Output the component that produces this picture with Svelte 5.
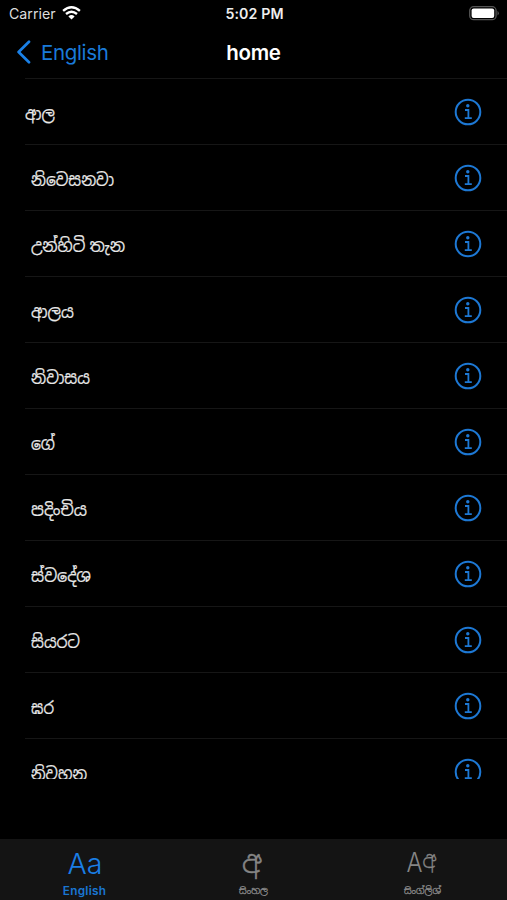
<script>
  const words = ['ආල', ' නිවෙසනවා', ' උන්හිටි තැන', ' ආලය', ' නිවාසය', ' ගේ', ' පදිංචිය', ' ස්වදේශ', ' සියරට', ' ඝර', ' නිවහන'];
  const widths = [30, 83, 94, 43, 59, 24, 56, 60, 49, 23, 56];
</script>

<div class="screen">
  <header class="status">
    <div class="carrier">
      <span>Carrier</span>
      <svg width="19" height="14" viewBox="0 0 19 14" fill="none" stroke="#fff" stroke-width="2.4">
        <path d="M1.1 4.9Q9.5 -2.3 17.9 4.9" /><path d="M4 8Q9.5 3.4 15 8" />
        <path d="M6.4 10.4Q9.5 7.8 12.6 10.4L9.5 13.5Z" fill="#fff" stroke="none" />
      </svg>
    </div>
    <div class="time">5:02 PM</div>
    <svg class="battery" width="31" height="15" viewBox="0 0 31 15">
      <rect x=".7" y=".7" width="26.4" height="13" rx="4" fill="none" stroke="#555" stroke-width="1.3" />
      <rect x="2.6" y="2.6" width="22.6" height="9.3" rx="2" fill="#fff" />
      <path d="M28.5 4.8Q31.2 7.2 28.5 9.6Z" fill="#555" />
    </svg>
  </header>
  <nav class="bar">
    <div class="back">
      <svg width="15" height="24" viewBox="0 0 15 24"><path d="M13 1.7L2.6 12L13 22.3" fill="none" stroke="#1a80e6" stroke-width="2.7" stroke-linecap="round" stroke-linejoin="round" /></svg>
      <span>English</span>
    </div>
    <h1>home</h1>
  </nav>
  <main>
    {#each words as word, i}
      <div class="row">
        <svg class="word" class:inset={i > 0} width="130" height="40" viewBox="0 0 130 40">
          <text x="0" y="25.5" textLength={widths[i]} lengthAdjust="spacingAndGlyphs">{word.trim()}</text>
        </svg>
        <svg class="info" width="28" height="28" viewBox="0 0 28 28">
          <circle cx="14" cy="14" r="12.3" fill="none" stroke="#1d78d4" stroke-width="2" />
          <circle cx="13.8" cy="7.7" r="1.7" fill="#1d78d4" />
          <path d="M11 12H14.4V20M10.8 20.2H17.8" fill="none" stroke="#1d78d4" stroke-width="1.8" />
        </svg>
      </div>
    {/each}
  </main>
  <footer>
    <div class="tab active">
      <svg width="60" height="42" viewBox="0 0 60 42"><text x="12.5" y="35" font-size="29" textLength="35" lengthAdjust="spacingAndGlyphs">Aa</text></svg>
      <span class="label">English</span>
    </div>
    <div class="tab">
      <svg width="60" height="42" viewBox="0 0 60 42"><text x="18" y="33.5" font-size="31" textLength="20" lengthAdjust="spacingAndGlyphs" stroke="#858585" stroke-width=".5">අ</text></svg>
      <svg width="60" height="18" viewBox="0 0 60 18"><text x="15" y="13" font-size="9.3" textLength="29" lengthAdjust="spacingAndGlyphs" stroke="#858585" stroke-width=".35">සිංහල</text></svg>
    </div>
    <div class="tab">
      <svg width="60" height="42" viewBox="0 0 60 42">
        <text x="13.5" y="33" font-size="27" textLength="16" lengthAdjust="spacingAndGlyphs">A</text>
        <text x="29.5" y="28.5" font-size="23" textLength="14" lengthAdjust="spacingAndGlyphs" stroke="#858585" stroke-width=".3">අ</text>
      </svg>
      <svg width="60" height="18" viewBox="0 0 60 18"><text x="11" y="13" font-size="9.3" textLength="37" lengthAdjust="spacingAndGlyphs" stroke="#858585" stroke-width=".35">සිංග්ලිශ්</text></svg>
    </div>
  </footer>
</div>

<style>
  :global(body) { margin: 0; background: #000; }
  .screen { width: 507px; height: 900px; overflow: hidden; background: #000; color: #eee; display: flex; flex-direction: column; font-family: Inter, "Noto Sans Sinhala", sans-serif; }
  .status { height: 28px; display: grid; grid-template-columns: 1fr auto 1fr; align-items: center; padding: 0 7px 1px 9px; box-sizing: border-box; flex: none; }
  .carrier { display: flex; gap: 6px; align-items: center; font-size: 14.2px; color: #ddd; }
  .carrier svg { margin-top: -2px; }
  .time { font-size: 14.2px; font-weight: 600; letter-spacing: .1px; }
  .battery { justify-self: end; margin-top: -1px; }
  .bar { height: 50px; flex: none; display: grid; grid-template-columns: 1fr auto 1fr; align-items: center; padding: 0 16px; }
  .back { display: flex; align-items: center; gap: 10px; font-size: 20.5px; letter-spacing: -.35px; color: #1a7ad9; margin-top: -2px; }
  h1 { margin: -1px 0 0; font-size: 20.5px; font-weight: 600; letter-spacing: -.3px; color: #fff; }
  main { height: 701px; overflow: hidden; flex: none; }
  .row { height: 66px; box-sizing: border-box; margin-left: 25px; padding-right: 25px; border-top: 1px solid #161616; display: flex; align-items: center; justify-content: space-between; }
  .word { font-size: 17.5px; fill: #e8e8e8; stroke: #e8e8e8; stroke-width: .2px; margin-top: 4px; }
  .inset { margin-left: 6px; }
  .info { margin-top: 1px; }
  footer { height: 61px; margin-top: auto; flex: none; background: #141414; display: grid; grid-template-columns: repeat(3, 169px); }
  .tab { display: flex; flex-direction: column; align-items: center; fill: #858585; font-weight: 300; }
  .tab > svg { flex: none; }
  .active { color: #1a76d2; fill: #1a7ee5; }
  .label { font-size: 11.8px; font-weight: 600; line-height: 20px; letter-spacing: .25px; }
</style>
